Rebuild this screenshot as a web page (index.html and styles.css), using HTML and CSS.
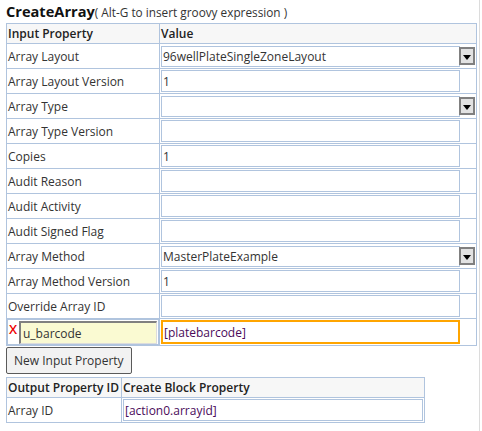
FILE: index.html
```html
<!DOCTYPE html>
<html>
<head>
<meta charset="utf-8">
<link rel="stylesheet" href="styles.css">
</head>
<body>
<div class="page">
  <div class="title"><span class="name">CreateArray</span><span class="hint">( Alt-G to insert groovy expression )</span></div>
  <table class="props">
    <tr class="head"><th class="c1">Input Property</th><th class="c2">Value</th></tr>
    <tr><td>Array Layout</td><td><span class="combo"><input class="field" value="96wellPlateSingleZoneLayout"><span class="drop"><span class="tri"></span></span></span></td></tr>
    <tr><td>Array Layout Version</td><td><input class="field" value="1"></td></tr>
    <tr><td>Array Type</td><td><span class="combo"><input class="field" value=""><span class="drop"><span class="tri"></span></span></span></td></tr>
    <tr><td>Array Type Version</td><td><input class="field" value=""></td></tr>
    <tr><td>Copies</td><td><input class="field" value="1"></td></tr>
    <tr><td>Audit Reason</td><td><input class="field" value=""></td></tr>
    <tr><td>Audit Activity</td><td><input class="field" value=""></td></tr>
    <tr><td>Audit Signed Flag</td><td><input class="field" value=""></td></tr>
    <tr><td>Array Method</td><td><span class="combo"><input class="field" value="MasterPlateExample"><span class="drop"><span class="tri"></span></span></span></td></tr>
    <tr><td>Array Method Version</td><td><input class="field" value="1"></td></tr>
    <tr><td>Override Array ID</td><td><input class="field" value=""></td></tr>
    <tr class="custom"><td><span class="del">X</span><input class="keyfield" value="u_barcode"></td><td><input class="field expr active" value="[platebarcode]"></td></tr>
  </table>
  <button class="btn">New Input Property</button>
  <table class="props out">
    <tr class="head"><th class="o1">Output Property ID</th><th class="o2">Create Block Property</th></tr>
    <tr><td>Array ID</td><td><input class="field expr ofield" value="[action0.arrayid]"></td></tr>
  </table>
</div>
</body>
</html>
```

FILE: styles.css
```css
html, body {
  margin: 0;
  padding: 0;
  background: #ffffff;
}
body {
  font-family: "Open Sans", "Liberation Sans", sans-serif;
  font-size: 12px;
  color: #333333;
}
.page {
  width: 473px;
  height: 431px;
  padding: 0 0 0 6px;
  border-right: 1px solid #dcdcdc;
  box-sizing: content-box;
}
.title {
  height: 23px;
  display: flex;
  align-items: baseline;
  padding-top: 2px;
  box-sizing: border-box;
}
.name {
  font-weight: bold;
  font-size: 14.6px;
  color: #111111;
  line-height: 19px;
}
.hint {
  font-size: 11.8px;
  color: #333333;
}
table.props {
  border-collapse: collapse;
  border: 1px solid #b0c4de;
}
table.props td, table.props th {
  border: 1px solid #b0c4de;
  padding: 1px 1px;
  height: 22px;
  text-align: left;
  vertical-align: middle;
  white-space: nowrap;
}
table.props tr.head th {
  background: #f7f7f7;
  font-weight: 600;
  height: 19px;
  padding: 0 1px;
  color: #222222;
}
th.c1 { width: 148px; }
th.c2 { width: 313px; }
.field {
  font: inherit;
  color: #333333;
  width: 299px;
  height: 22px;
  box-sizing: border-box;
  border: 1px solid #b0c4de;
  padding: 0 1px;
  margin: 0;
  display: block;
  background: #ffffff;
  outline: none;
}
.combo {
  display: flex;
  align-items: center;
}
.combo .field { height: 21px; }
.drop {
  width: 16px;
  height: 18px;
  box-sizing: border-box;
  border: 2px solid #808080;
  background: #e2e2e2;
  margin-left: -1px;
  display: flex;
  align-items: center;
  justify-content: center;
}
.tri {
  width: 0;
  height: 0;
  border-left: 4px solid transparent;
  border-right: 4px solid transparent;
  border-top: 5px solid #000000;
  margin-top: 2px;
}
.expr { color: #4a0a5a; }
.active {
  border: 2px solid #ffa500;
  height: 24px;
}
tr.custom td:first-child {
  display: flex;
  align-items: flex-start;
  padding: 1px 1px 1px 1px;
}
.del {
  color: #ee0000;
  font-size: 13px;
  font-weight: 600;
  line-height: 14px;
  width: 10px;
  margin-top: 1px;
}
.keyfield {
  font: inherit;
  color: #333333;
  width: 138px;
  height: 23px;
  box-sizing: border-box;
  margin: 0;
  padding: 0 2px;
  background: #fafad2;
  border: 1px solid #dcdcdc;
  border-top: 2px solid #808080;
  border-left: 2px solid #808080;
  outline: none;
}
.btn {
  font: inherit;
  font-size: 12px;
  color: #333333;
  background: #f2f2f2;
  border: 1px solid #5a5a5a;
  border-radius: 2px;
  height: 27px;
  padding: 0 7px;
  margin: 1px 0 3px 0;
  display: block;
}
th.o1 { width: 112px; }
th.o2 { width: 299px; }
.ofield { width: 300px; }
```
